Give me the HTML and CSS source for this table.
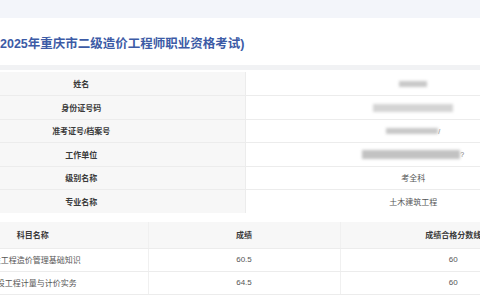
FILE: index.html
```html
<!DOCTYPE html>
<html lang="zh-CN">
<head>
<meta charset="utf-8">
<link rel="stylesheet" href="styles.css">
</head>
<body>
<div class="topbar"></div>
<div class="page">
  <div class="card">
    <h1 class="title">2025年重庆市二级造价工程师职业资格考试)</h1>
  </div>
  <div class="sep"></div>
  <table class="info">
    <tr><th>姓名</th><td><span class="blur b-name"></span></td></tr>
    <tr><th>身份证号码</th><td><span class="blur b-id"></span></td></tr>
    <tr><th>准考证号/档案号</th><td><span class="blur b-no"></span><span class="tail">/</span></td></tr>
    <tr><th>工作单位</th><td><span class="blur b-work"></span><span class="tail">?</span></td></tr>
    <tr><th>级别名称</th><td>考全科</td></tr>
    <tr><th>专业名称</th><td>土木建筑工程</td></tr>
  </table>
  <table class="score">
    <tr class="head"><th class="c1">科目名称</th><th class="c2">成绩</th><th class="c3">成绩合格分数线</th></tr>
    <tr><td class="c1 subj">建设工程造价管理基础知识</td><td class="c2">60.5</td><td class="c3">60</td></tr>
    <tr><td class="c1 subj">建设工程计量与计价实务</td><td class="c2">64.5</td><td class="c3">60</td></tr>
  </table>
</div>
</body>
</html>
```

FILE: styles.css
```css
html, body {
  margin: 0;
  padding: 0;
  background: #ffffff;
  overflow: hidden;
  width: 480px;
  height: 300px;
}
body {
  font-family: "Liberation Sans", "Noto Sans CJK SC", sans-serif;
}
.topbar {
  height: 18px;
  background: #f3f5fa;
}
.page {
  margin-left: -82px;
  width: 663px;
}
.card {
  padding: 17px 0 12px 82px;
}
.title {
  margin: 0;
  font-size: 12.5px;
  line-height: 18px;
  font-weight: bold;
  color: #3c5ba6;
  white-space: nowrap;
}
.sep {
  height: 5px;
  background: #f1f2f4;
  margin-bottom: 2px;
}
table {
  border-collapse: collapse;
  table-layout: fixed;
}
.info {
  width: 663px;
}
.info th, .info td {
  height: 23.5px;
  padding: 0;
  font-size: 8px;
  text-align: center;
  border-bottom: 1px solid #ececec;
  box-sizing: border-box;
}
.info th {
  width: 327px;
  background: #f7f7f7;
  color: #3a3a3a;
  font-weight: bold;
  border-right: 1px solid #ececec;
}
.info td {
  color: #555;
}
.info tr:last-child th,
.info tr:last-child td {
  border-bottom: none;
}
.blur {
  display: inline-block;
  vertical-align: middle;
  height: 7px;
  background: #bdbdbd;
  filter: blur(1.5px);
}
.b-name { width: 28px; height: 6px; background: #c8c8c8; }
.b-id { width: 80px; height: 8px; background: #d4d4d4; }
.b-no { width: 52px; height: 6px; background: #c8c8c8; }
.b-work { width: 98px; height: 9px; background: #c2c2c2; }
.tail {
  display: inline-block;
  vertical-align: middle;
  font-size: 7px;
  color: #777;
}
.score {
  width: 648px;
  margin-top: 9px;
}
.score th, .score td {
  padding: 0;
  font-size: 8px;
  text-align: center;
  border-bottom: 1px solid #ececec;
  box-sizing: border-box;
}
.score .c1 { width: 230px; }
.score .c2 { width: 192px; border-left: 1px solid #f0f0f0; border-right: 1px solid #f0f0f0; }
.score .c3 { width: 226px; }
.score .head th {
  height: 26px;
  background: #f7f7f7;
  color: #3a3a3a;
  font-weight: bold;
}
.score td {
  height: 23px;
  color: #555;
}
```
